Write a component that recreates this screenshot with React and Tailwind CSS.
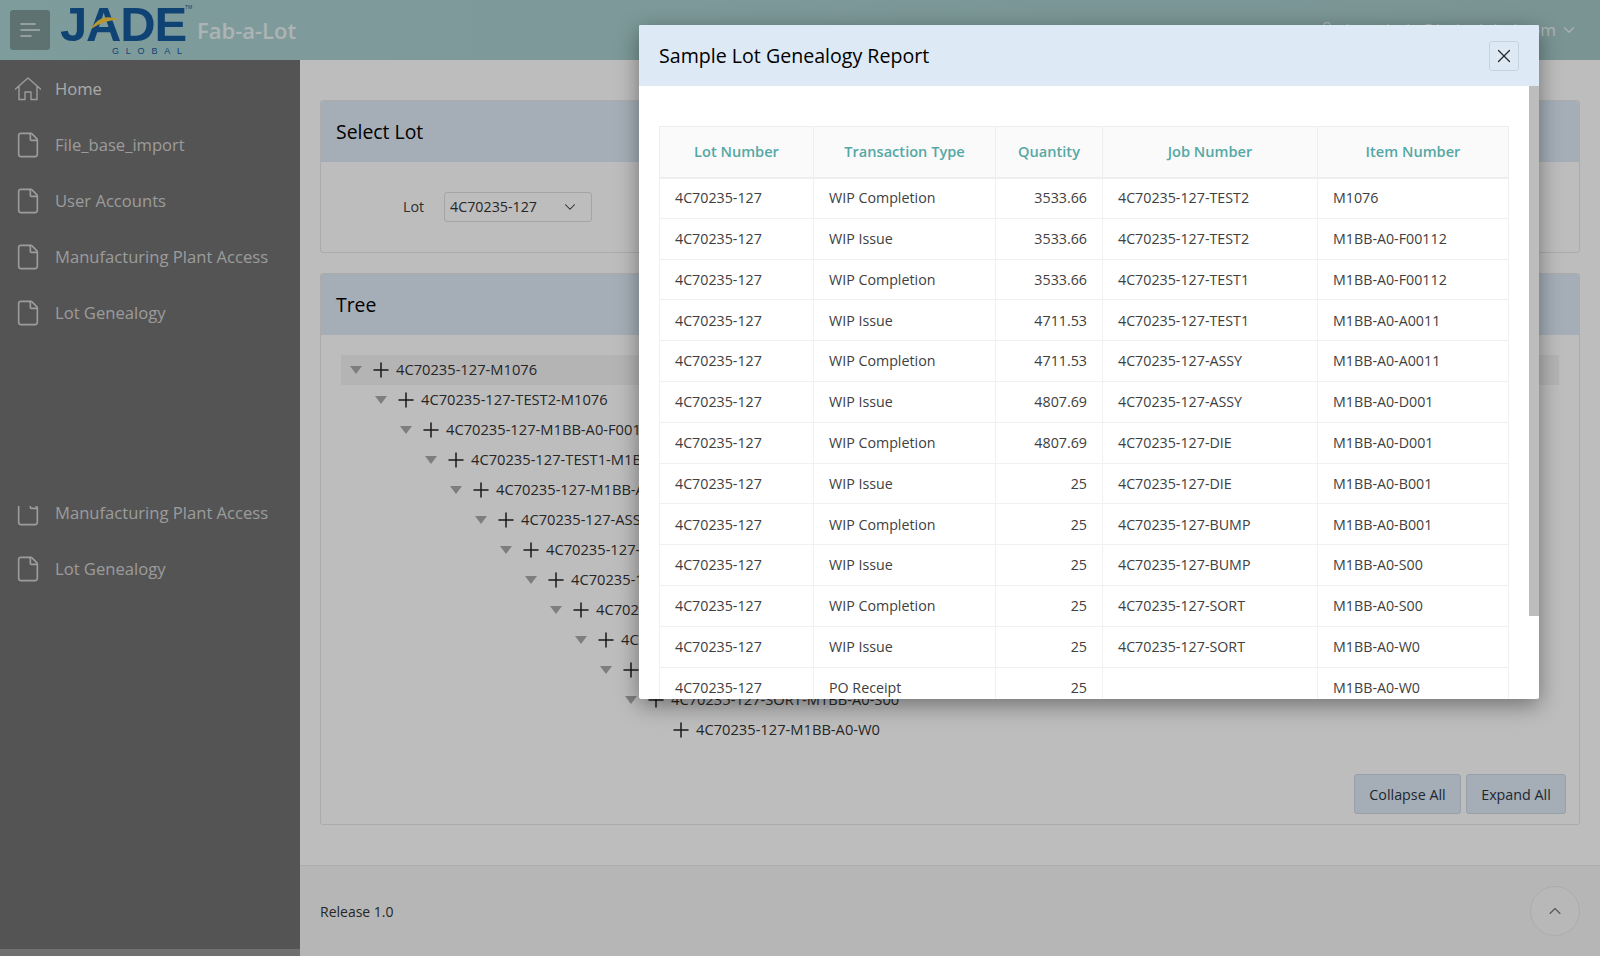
import React from "react";
import { File, Plus, X, ChevronDown, ChevronUp, User } from "lucide-react";

function HouseIcon({ className }) {
  return (
    <svg width="28" height="28" viewBox="0 0 28 28" fill="none" stroke="currentColor" strokeWidth="1.4" strokeLinejoin="round" strokeLinecap="round" className={className}>
      <path d="M1.5 14 L14 3 L26.5 14 M5 11.5 V24.5 H11 V17 H17 V24.5 H23 V11.5" />
    </svg>
  );
}

const navTop = [
  { label: "Home", icon: HouseIcon, bright: true },
  { label: "File_base_import", icon: File },
  { label: "User Accounts", icon: File },
  { label: "Manufacturing Plant Access", icon: File },
  { label: "Lot Genealogy", icon: File },
];

const treeNodes = [
  "4C70235-127-M1076",
  "4C70235-127-TEST2-M1076",
  "4C70235-127-M1BB-A0-F00112",
  "4C70235-127-TEST1-M1BB-A0-F00112",
  "4C70235-127-M1BB-A0-A0011",
  "4C70235-127-ASSY-M1BB-A0-A0011",
  "4C70235-127-M1BB-A0-D001",
  "4C70235-127-DIE-M1BB-A0-D001",
  "4C70235-127-M1BB-A0-B001",
  "4C70235-127-BUMP-M1BB-A0-B001",
  "4C70235-127-M1BB-A0-S00",
  "4C70235-127-SORT-M1BB-A0-S00",
  "4C70235-127-M1BB-A0-W0",
];

const rows = [
  ["WIP Completion", "3533.66", "4C70235-127-TEST2", "M1076"],
  ["WIP Issue", "3533.66", "4C70235-127-TEST2", "M1BB-A0-F00112"],
  ["WIP Completion", "3533.66", "4C70235-127-TEST1", "M1BB-A0-F00112"],
  ["WIP Issue", "4711.53", "4C70235-127-TEST1", "M1BB-A0-A0011"],
  ["WIP Completion", "4711.53", "4C70235-127-ASSY", "M1BB-A0-A0011"],
  ["WIP Issue", "4807.69", "4C70235-127-ASSY", "M1BB-A0-D001"],
  ["WIP Completion", "4807.69", "4C70235-127-DIE", "M1BB-A0-D001"],
  ["WIP Issue", "25", "4C70235-127-DIE", "M1BB-A0-B001"],
  ["WIP Completion", "25", "4C70235-127-BUMP", "M1BB-A0-B001"],
  ["WIP Issue", "25", "4C70235-127-BUMP", "M1BB-A0-S00"],
  ["WIP Completion", "25", "4C70235-127-SORT", "M1BB-A0-S00"],
  ["WIP Issue", "25", "4C70235-127-SORT", "M1BB-A0-W0"],
  ["PO Receipt", "25", "", "M1BB-A0-W0"],
];

function Logo() {
  return (
    <div className="relative ml-[10px] h-[60px] w-[130px] shrink-0 font-['Liberation_Sans',sans-serif] text-[#155a9a]">
      <div className="absolute left-0 top-[4px] text-[49px] font-bold leading-[40px] tracking-[-1.2px]">JADE</div>
      <svg className="absolute left-[31px] top-[15px]" width="30" height="15" viewBox="0 0 30 15">
        <path d="M0 14 C6 3 16 -1 28 5 C18 5 9 8 0 14 Z" fill="#f5c93f" />
      </svg>
      <div className="absolute left-[52px] top-[46px] text-[9px] leading-[11px] tracking-[6.8px]">GLOBAL</div>
      <div className="absolute left-[125px] top-[4px] text-[5px] leading-[6px]">TM</div>
    </div>
  );
}

function Sidebar() {
  return (
    <aside className="flex w-[300px] shrink-0 flex-col bg-[#717171] pt-px">
      {navTop.map((item) => (
        <div key={item.label} className="flex h-[56px] items-center pl-[14px]">
          <item.icon size={28} strokeWidth={1.4} className="shrink-0 text-[#d0d0d0]" />
          <span className={`ml-[13px] text-[16.6px] ${item.bright ? "text-[#e2e2e2]" : "text-[#cfcfcf]"}`}>{item.label}</span>
        </div>
      ))}
      <div className="mt-[144px] flex h-[56px] items-center pl-[14px]">
        <div className="mt-[7px] flex h-[21px] shrink-0 items-end overflow-hidden">
          <File size={28} strokeWidth={1.4} className="text-[#d0d0d0]" />
        </div>
        <span className="ml-[13px] text-[16.6px] text-[#cfcfcf]">Manufacturing Plant Access</span>
      </div>
      <div className="flex h-[56px] items-center pl-[14px]">
        <File size={28} strokeWidth={1.4} className="shrink-0 text-[#d0d0d0]" />
        <span className="ml-[13px] text-[16.6px] text-[#cfcfcf]">Lot Genealogy</span>
      </div>
      <div className="mt-auto h-[7px] bg-[#969696]" />
    </aside>
  );
}

function Panel({ title, className, children }) {
  return (
    <section className={`flex flex-col rounded-[3px] border border-[#e4e4e4] ${className}`}>
      <div className="flex h-[61px] shrink-0 items-center rounded-t-[3px] bg-[#dce8f5] px-[15px] pt-px text-[19.4px] font-medium text-black">
        {title}
      </div>
      {children}
    </section>
  );
}

function TreeRow({ label, depth, last }) {
  return (
    <div
      className={`flex h-[30px] items-center ${depth === 0 ? "bg-[#f0f0f0]" : ""}`}
      style={{ paddingLeft: depth * 25 + 9 }}
    >
      <span className={`h-0 w-0 border-x-[6px] border-t-[8px] border-x-transparent ${last ? "border-t-transparent" : "border-t-[#a8a8a8]"}`} />
      <Plus size={24} strokeWidth={1.5} className="ml-[7px] shrink-0 text-[#222]" />
      <span className="ml-[3px] whitespace-nowrap pb-[2px] text-[14.7px] text-[#333]">{label}</span>
    </div>
  );
}

function ReportModal() {
  return (
    <div className="absolute left-[639px] top-[25px] flex h-[674px] w-[900px] flex-col overflow-hidden rounded-[2px] bg-white shadow-[0_6px_22px_rgba(0,0,0,0.4)]">
      <div className="flex h-[61px] shrink-0 items-center justify-between bg-[#dde9f5] pl-[20px] pr-[20px]">
        <h2 className="pt-px text-[19.6px] font-medium text-black">Sample Lot Genealogy Report</h2>
        <button className="flex h-[30px] w-[30px] items-center justify-center rounded-[3px] border border-[#c6d2de]">
          <X size={22} strokeWidth={1.3} className="text-[#222]" />
        </button>
      </div>
      <div className="flex min-h-0 flex-1">
        <div className="min-w-0 flex-1 overflow-hidden pl-[20px] pt-[40px]">
          <table className="w-[849px] table-fixed border-collapse text-[14.25px] text-[#404040]">
            <colgroup>
              <col className="w-[154px]" />
              <col className="w-[182px]" />
              <col className="w-[107px]" />
              <col className="w-[215px]" />
              <col className="w-[191px]" />
            </colgroup>
            <thead>
              <tr className="h-[51px] bg-[#fafafa]">
                {["Lot Number", "Transaction Type", "Quantity", "Job Number", "Item Number"].map((h) => (
                  <th key={h} className="border border-b-2 border-[#eeeeee] pt-px text-center text-[14.6px] font-semibold text-[#55a8a5]">
                    {h}
                  </th>
                ))}
              </tr>
            </thead>
            <tbody>
              {rows.map((r, i) => (
                <tr key={i} className="h-[40.8px]">
                  <td className="border border-[#f1f1f1] px-[15px]">4C70235-127</td>
                  <td className="border border-[#f1f1f1] px-[15px]">{r[0]}</td>
                  <td className="border border-[#f1f1f1] px-[15px] text-right">{r[1]}</td>
                  <td className="border border-[#f1f1f1] px-[15px]">{r[2]}</td>
                  <td className="border border-[#f1f1f1] px-[15px]">{r[3]}</td>
                </tr>
              ))}
            </tbody>
          </table>
        </div>
        <div className="w-[10px] shrink-0">
          <div className="h-[530px] bg-[#bdbdbd]" />
        </div>
      </div>
    </div>
  );
}

export default function App() {
  return (
    <div className="relative flex h-[956px] w-[1600px] flex-col overflow-hidden bg-[#fcfcfc] font-['Open_Sans',sans-serif]">
      <header className="flex h-[60px] shrink-0 items-center bg-gradient-to-r from-[#aad0d1] to-[#a3c6c6] pl-[10px] pr-[22px]">
        <button className="flex h-[40px] w-[40px] shrink-0 items-center justify-center rounded-[3px] bg-[#7e9999]">
          <svg width="20" height="14" viewBox="0 0 20 14" fill="none" stroke="#e2e8e8" strokeWidth="1.6" strokeLinecap="round">
            <path d="M1 1h14M1 7h19M1 13h10" />
          </svg>
        </button>
        <Logo />
        <span className="ml-[7px] text-[22px] font-semibold text-[#e6f0f0]">Fab-a-Lot</span>
        <div className="ml-auto flex items-center text-[#e6f0f0]">
          <User size={20} strokeWidth={1.5} />
          <span className="ml-[8px] text-[17px]">lot.admin@jadeglobal.com</span>
          <ChevronDown size={18} strokeWidth={1.5} className="ml-[4px]" />
        </div>
      </header>
      <div className="flex min-h-0 flex-1">
        <Sidebar />
        <div className="flex min-w-0 flex-1 flex-col">
          <main className="flex h-[805px] shrink-0 flex-col gap-[20px] px-[20px] pt-[40px]">
            <Panel title="Select Lot" className="h-[153px]">
              <div className="flex flex-1 items-center pl-[82px]">
                <label className="text-[14.25px] text-[#404040]">Lot</label>
                <div className="ml-[20px] flex h-[30px] w-[148px] items-center justify-between rounded-[3px] border border-[#dcdcdc] pl-[5px] pr-[12px] text-[14.25px] text-[#333]">
                  4C70235-127
                  <ChevronDown size={18} strokeWidth={1.4} />
                </div>
              </div>
            </Panel>
            <Panel title="Tree" className="h-[552px]">
              <div className="min-h-0 flex-1 px-[20px] pt-[20px]">
                {treeNodes.map((n, i) => (
                  <TreeRow key={n} label={n} depth={i} last={i === treeNodes.length - 1} />
                ))}
              </div>
              <div className="flex justify-end gap-[5px] pb-[10px] pr-[13px]">
                <button className="h-[40px] w-[107px] rounded-[3px] border border-[#cbd7e3] bg-[#dce8f5] pt-px text-[14.3px] text-[#2a3442]">Collapse All</button>
                <button className="h-[40px] w-[100px] rounded-[3px] border border-[#cbd7e3] bg-[#dce8f5] pt-px text-[14.3px] text-[#2a3442]">Expand All</button>
              </div>
            </Panel>
          </main>
          <footer className="flex flex-1 items-center justify-between border-t border-[#e8e8e8] bg-[#f3f3f3] pl-[20px] pr-[20px]">
            <span className="pt-px text-[14px] text-[#333]">Release 1.0</span>
            <button className="flex h-[50px] w-[50px] items-center justify-center rounded-full border border-[#e6e6e6] bg-[#f6f6f6]">
              <ChevronUp size={20} strokeWidth={1.4} className="text-[#777]" />
            </button>
          </footer>
        </div>
      </div>
      <div className="absolute inset-0 bg-black/25" />
      <ReportModal />
    </div>
  );
}
